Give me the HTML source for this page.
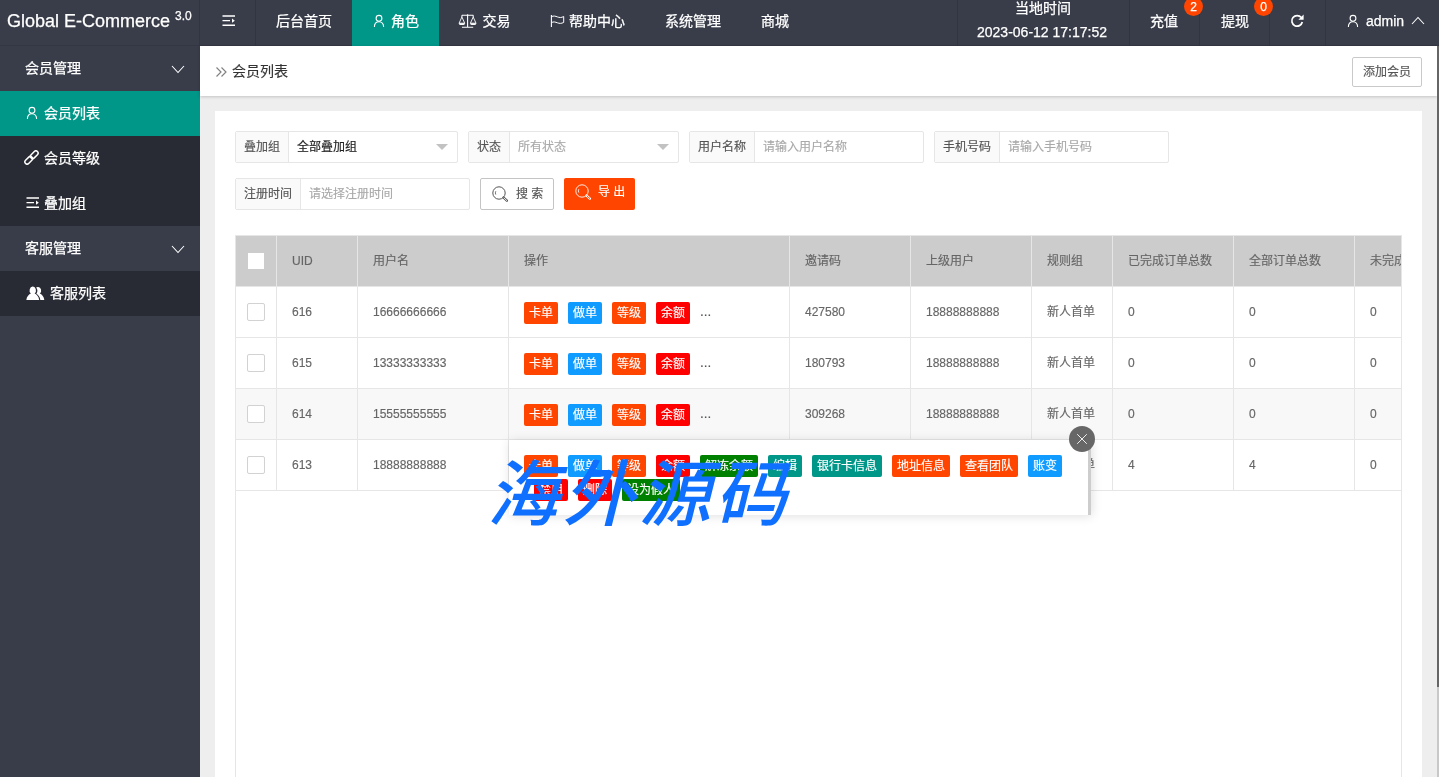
<!DOCTYPE html>
<html lang="zh-CN">
<head>
<meta charset="utf-8">
<title>会员列表</title>
<style>
*{box-sizing:border-box;margin:0;padding:0}
html,body{width:1439px;height:777px;overflow:hidden;background:#eee}
body{font-family:"Liberation Sans","Noto Sans CJK SC",sans-serif;font-size:14px;color:#333;position:relative;line-height:1}
svg{display:block}
#hd,#side{-webkit-text-stroke:0.250px #fff}
#crumb,#card,#tip{-webkit-text-stroke-width:0.150px}
#root{position:absolute;left:0;top:0;width:1439px;height:777px;will-change:transform;overflow:hidden}
.abs{position:absolute}
/* header */
#hd{position:absolute;left:0;top:0;width:1439px;height:46px;background:#393d49;color:#fff}
#logo{position:absolute;left:7px;top:0;height:46px;line-height:43px;font-size:18px;white-space:nowrap;color:#fff}
#logo sup{font-size:12px;position:relative;top:-0.400px;vertical-align:super;line-height:0}
.nav{position:absolute;top:0;height:46px;line-height:42.4px;font-size:14px;color:#fff;white-space:nowrap;text-align:center}
.nav.on{background:#009688}
.vline{position:absolute;top:0;width:1px;height:46px;background:#323540}
.nav svg{display:inline-block;vertical-align:middle;position:relative;top:-1px}
.badge{position:absolute;z-index:2;width:19px;height:19px;border-radius:50%;background:#ff4500;color:#fff;font-size:12px;line-height:21px;text-align:center;top:-3.200px}
/* side */
#side{position:absolute;left:0;top:46px;width:200px;height:731px;background:#393d49}
.mi{position:absolute;left:0;width:200px;height:45px;line-height:44.400px;color:#fff;font-size:14px;white-space:nowrap}
.mi.sub{background:#282b33}
.mi.on{background:#009688}
.mi span{position:absolute;top:0}
.mi svg{position:absolute}
/* crumb */
#crumb{position:absolute;left:200px;top:46px;width:1237px;height:50px;background:#fff;box-shadow:0 1px 3px rgba(0,0,0,.18)}
#crumb .t{position:absolute;left:32px;top:0;line-height:51px;font-size:14px;color:#333}
#addbtn{position:absolute;left:1152px;top:11px;width:70px;height:30px;border:1px solid #c9c9c9;border-radius:2px;background:#fff;font-size:12px;line-height:28px;text-align:center;color:#555}
/* card */
#card{position:absolute;left:215px;top:111px;width:1207px;height:700px;background:#fff}
.grp{position:absolute;height:32px;border:1px solid #e6e6e6;border-radius:2px;background:#fff}
.grp .lb{position:absolute;left:0;top:0;height:30px;background:#fafafa;border-right:1px solid #e6e6e6;font-size:12px;line-height:31px;color:#555;text-align:center}
.grp .ph{position:absolute;top:0;height:30px;line-height:31px;font-size:12px;color:#a9a9a9;white-space:nowrap}
.grp .tri{position:absolute;top:12px;width:0;height:0;border-left:6px solid transparent;border-right:6px solid transparent;border-top:6px solid #c2c2c2}
.btn{position:absolute;height:32px;border-radius:2px;font-size:12px;line-height:30px;white-space:nowrap}
/* table */
#tb{position:absolute;left:20px;top:124px;width:1167px;height:600px;border:1px solid #e6e6e6;overflow:hidden}
.row{position:absolute;left:0;width:1300px;height:51px;border-bottom:1px solid #e6e6e6}
.row.h{background:#ccc;color:#666}
.row.hv{background:#f8f8f8}
.c{position:absolute;top:0;height:50px;border-right:1px solid #e6e6e6;font-size:12px;line-height:50px;color:#666;padding-left:15px;white-space:nowrap;overflow:hidden}
.ck{display:block;position:absolute;left:11px;top:16px;width:18px;height:18px;border:1px solid #d2d2d2;border-radius:2px;background:#fff}
.b{font-style:normal;position:absolute;top:15px;height:22px;border-radius:2px;color:#fff;font-size:12px;line-height:23px;text-align:center;white-space:nowrap}
.bo{background:#ff4500}.bb{background:#0f9bff}.br{background:#ff0000}.bg{background:#008000}.bt{background:#009688}
#tip{position:absolute;left:509px;top:439.500px;width:582px;height:75.500px;background:#fff;border-right:3px solid #cdcdcd;box-shadow:1px 1px 10px rgba(0,0,0,.13)}
#tip .b{top:auto}
#cls{position:absolute;left:1069px;top:425.800px;width:26px;height:26px;border-radius:50%;background:#676767}
#wm{position:absolute;left:484px;top:459px;font-family:"Liberation Sans","Noto Sans CJK SC",sans-serif;font-size:72px;font-weight:500;color:#0f6fff;white-space:nowrap;line-height:1;letter-spacing:4px;transform:skewX(-14deg);transform-origin:0 100%}
#sb{position:absolute;left:1437px;top:46px;width:2px;height:731px;background:#c8c8c8}
#sb i{position:absolute;left:0;top:0;width:2px;height:641px;background:#666}
</style>
</head>
<body>
<div id="root">
<div id="hd">
  <div id="logo">Global E-Commerce <sup>3.0</sup></div>
  <div class="abs" style="left:0;top:45px;width:1439px;height:1px;background:#343743"></div>
  <div class="vline" style="left:199px"></div>
  <svg class="abs" style="left:221.500px;top:15.400px" width="14" height="12" viewBox="0 0 14 12"><path d="M0.500 1h12.500M0.500 5.650h7.500M0.500 10.300h12.500" stroke="#fff" stroke-width="1.400" fill="none"/><path d="M10 3.500l2.800 2.150L10 7.800z" fill="#fff"/></svg>
  <div class="vline" style="left:255px"></div>
  <div class="nav" style="left:256px;width:96px">后台首页</div>
  <div class="nav on" style="left:352px;width:87px"></div>
  <svg class="abs" style="left:373px;top:14px" width="12" height="14" viewBox="0 0 12 14"><circle cx="6" cy="4.3" r="2.9" stroke="#fff" stroke-width="1.1" fill="none"/><path d="M1.400 13c0-3.200 1.900-5.300 4.600-5.300s4.600 2.100 4.600 5.300" stroke="#fff" stroke-width="1.1" fill="none"/></svg>
  <div class="nav" style="left:391px">角色</div>
  <svg class="abs" style="left:458px;top:14px" width="19" height="14" viewBox="0 0 19 14"><path d="M9.600 0.300V13.300M4 13.300H15.200M3.900 1.200H15.300M3.900 1.200V3M15.200 1.200V3" stroke="#fff" stroke-width="1.100" fill="none"/><path d="M3.900 3L1.100 9.200H6.700ZM15.200 3L12.400 9.200H18Z" stroke="#fff" stroke-width="0.900" fill="none" stroke-linejoin="round"/><path d="M0.700 9.200H7.100a3.200 1.900 0 0 1-6.400 0zM12 9.200H18.400a3.200 1.900 0 0 1-6.400 0z" fill="#fff"/></svg>
  <div class="nav" style="left:482.500px">交易</div>
  <svg class="abs" style="left:550px;top:14px" width="15" height="14" viewBox="0 0 15 14"><path d="M1.400 1V13" stroke="#fff" stroke-width="1.100" fill="none"/><path d="M1.400 2.700c2.100-1.200 4.200-0.500 6 0.200s4 1 6.300-0.400v5.900c-2.300 1.400-4.500 1.100-6.300 0.400s-3.900-1.400-6-0.200" stroke="#fff" stroke-width="1" fill="none"/></svg>
  <div class="nav" style="left:569px">帮助中心</div>
  <div class="nav" style="left:665px">系统管理</div>
  <div class="nav" style="left:761px">商城</div>
  <div class="vline" style="left:957px"></div>
  <div class="nav" style="left:1015px;top:-13px">当地时间</div>
  <div class="nav" style="left:977px;top:11.400px">2023-06-12 17:17:52</div>
  <div class="vline" style="left:1129px"></div>
  <div class="nav" style="left:1150px">充值</div>
  <div class="badge" style="left:1184px">2</div>
  <div class="vline" style="left:1199px"></div>
  <div class="nav" style="left:1221px">提现</div>
  <div class="badge" style="left:1254px">0</div>
  <div class="vline" style="left:1269px"></div>
  <svg class="abs" style="left:1290px;top:14px" width="15" height="14" viewBox="0 0 15 14"><path d="M11.300 3.600A5.300 5.300 0 1 0 12.300 8" stroke="#fff" stroke-width="1.700" fill="none"/><path d="M13.600 0.600v5.200h-5.200z" fill="#fff"/></svg>
  <div class="vline" style="left:1325px"></div>
  <svg class="abs" style="left:1347px;top:14px" width="12" height="14" viewBox="0 0 12 14"><circle cx="6" cy="4.300" r="2.900" stroke="#fff" stroke-width="1.100" fill="none"/><path d="M1.400 13c0-3.200 1.900-5.300 4.600-5.300s4.600 2.100 4.600 5.300" stroke="#fff" stroke-width="1.100" fill="none"/></svg>
  <div class="nav" style="left:1366px">admin</div>
  <svg class="abs" style="left:1411px;top:16px" width="14" height="9" viewBox="0 0 14 9"><path d="M1 8l6-6.500 6 6.500" stroke="#fff" stroke-width="1.100" fill="none"/></svg>
</div>
<div id="side">
  <div class="mi" style="top:0"><span style="left:25px">会员管理</span><svg style="left:171px;top:19px" width="14" height="9" viewBox="0 0 14 9"><path d="M1 1l6 6.500 6-6.500" stroke="#fff" stroke-width="1.100" fill="none"/></svg></div>
  <div class="mi sub on" style="top:45px"><svg style="left:26px;top:15px" width="12" height="14" viewBox="0 0 12 14"><circle cx="6" cy="4.300" r="2.900" stroke="#fff" stroke-width="1.100" fill="none"/><path d="M1.400 13c0-3.200 1.900-5.300 4.600-5.300s4.600 2.100 4.600 5.300" stroke="#fff" stroke-width="1.100" fill="none"/></svg><span style="left:44px">会员列表</span></div>
  <div class="mi sub" style="top:90px"><svg style="left:24px;top:14.200px" width="15" height="15" viewBox="0 0 15 15"><g transform="rotate(-45 7.500 7.500)" stroke="#fff" stroke-width="1.500" fill="none"><rect x="-0.900" y="5.300" width="8.900" height="4.400" rx="2.200"/><rect x="7" y="5.300" width="8.900" height="4.400" rx="2.200"/></g></svg><span style="left:44px">会员等级</span></div>
  <div class="mi sub" style="top:135px"><svg style="left:25.500px;top:16.200px" width="14" height="12" viewBox="0 0 14 12"><path d="M0.500 1h12.500M0.500 5.650h7.500M0.500 10.300h12.500" stroke="#fff" stroke-width="1.400" fill="none"/><path d="M10 3.500l2.800 2.150L10 7.800z" fill="#fff"/></svg><span style="left:44px">叠加组</span></div>
  <div class="mi" style="top:180px"><span style="left:25px">客服管理</span><svg style="left:171px;top:19px" width="14" height="9" viewBox="0 0 14 9"><path d="M1 1l6 6.500 6-6.500" stroke="#fff" stroke-width="1.100" fill="none"/></svg></div>
  <div class="mi sub" style="top:225px"><svg style="left:25.500px;top:14.600px" width="19" height="15" viewBox="0 0 19 15"><g transform="scale(1.040,1.170)"><path d="M6.500 0.500a3 3.300 0 0 1 1.800 6c1.800 0.800 4 2.300 4.400 5.500h-12.400c0.400-3.200 2.600-4.700 4.400-5.500a3 3.300 0 0 1 1.800-6z" fill="#fff"/><path d="M11.800 0.800a2.800 3.100 0 0 1 1.500 5.700c1.800 0.800 3.900 2.300 4.300 5.500h-3.800c-0.400-2.600-1.900-4.300-3.800-5.300 1.300-1.400 1.400-4-0.300-5.400a3 3 0 0 1 2.100-0.500z" fill="#fff"/></g></svg><span style="left:50px">客服列表</span></div>
</div>
<div id="crumb"><svg class="abs" style="left:15px;top:19.800px" width="12" height="12" viewBox="0 0 12 12"><path d="M1.500 1.500l4.500 4.500-4.500 4.500M6.500 1.500l4.500 4.500-4.500 4.500" stroke="#808080" stroke-width="1.150" fill="none"/></svg><div class="t">会员列表</div><div id="addbtn">添加会员</div></div>
<div id="card">
<div class="grp" style="left:20px;top:20px;width:223px"><div class="lb" style="width:53px">叠加组</div><div class="ph" style="color:#222;left:61px">全部叠加组</div><i class="tri" style="left:200px"></i></div>
<div class="grp" style="left:253px;top:20px;width:211px"><div class="lb" style="width:41px">状态</div><div class="ph" style="left:49px">所有状态</div><i class="tri" style="left:188px"></i></div>
<div class="grp" style="left:474px;top:20px;width:235px"><div class="lb" style="width:65px">用户名称</div><div class="ph" style="left:73px">请输入用户名称</div></div>
<div class="grp" style="left:719px;top:20px;width:235px"><div class="lb" style="width:65px">手机号码</div><div class="ph" style="left:73px">请输入手机号码</div></div>
<div class="grp" style="left:20px;top:67px;width:235px"><div class="lb" style="width:65px">注册时间</div><div class="ph" style="left:73px">请选择注册时间</div></div>
<div class="btn" style="left:265px;top:67px;width:74px;border:1px solid #c4c4c4;background:#fff;color:#555"><svg class="abs" style="left:11px;top:6.800px" width="18" height="17" viewBox="0 0 18 17"><circle cx="7" cy="7" r="6.200" stroke="#555" stroke-width="1" fill="none"/><path d="M3.800 5.200a3.600 3.600 0 0 0 0 3.400" stroke="#555" stroke-width="0.800" fill="none"/><path d="M11.500 11.500l3.400 3.200" stroke="#555" stroke-width="2.300" stroke-linecap="round"/><path d="M12 12l2.700 2.500" stroke="#fff" stroke-width="0.900" stroke-linecap="round"/></svg><span class="abs" style="left:35px;top:-0.500px">搜 索</span></div>
<div class="btn" style="left:349px;top:67px;width:71px;background:#ff4500;color:#fff"><svg class="abs" style="left:11px;top:5.800px" width="18" height="17" viewBox="0 0 18 17"><circle cx="7" cy="7" r="6.200" stroke="#fff" stroke-width="0.900" fill="none"/><path d="M3.800 5.200a3.600 3.600 0 0 0 0 3.400" stroke="#fff" stroke-width="0.800" fill="none"/><path d="M11.500 11.500l3.400 3.200" stroke="#fff" stroke-width="2.300" stroke-linecap="round"/><path d="M12 12l2.700 2.500" stroke="#ff4500" stroke-width="0.900" stroke-linecap="round"/></svg><span class="abs" style="left:34px;top:-1.500px">导 出</span></div>
<div id="tb">
<div class="row h" style="top:0"><div class="c" style="left:0;width:41px;padding:0"><i class="ck" style="border:0;border-radius:0;left:12px;top:17px;width:16px;height:16px"></i></div><div class="c" style="left:41px;width:81px">UID</div><div class="c" style="left:122px;width:151px">用户名</div><div class="c" style="left:273px;width:281px">操作</div><div class="c" style="left:554px;width:121px">邀请码</div><div class="c" style="left:675px;width:121px">上级用户</div><div class="c" style="left:796px;width:81px">规则组</div><div class="c" style="left:877px;width:121px">已完成订单总数</div><div class="c" style="left:998px;width:121px">全部订单总数</div><div class="c" style="left:1119px;width:121px">未完成订单</div></div>
<div class="row" style="top:51px"><div class="c" style="left:0;width:41px;padding:0"><i class="ck"></i></div><div class="c" style="left:41px;width:81px">616</div><div class="c" style="left:122px;width:151px">16666666666</div><div class="c" style="left:273px;width:281px;padding:0"><i class="b bo" style="left:15px;width:34px">卡单</i><i class="b bb" style="left:59px;width:34px">做单</i><i class="b bo" style="left:103px;width:34px">等级</i><i class="b br" style="left:147px;width:34px">余额</i><span class="abs" style="left:191px;top:0;font-size:13.500px;color:#555">...</span></div><div class="c" style="left:554px;width:121px">427580</div><div class="c" style="left:675px;width:121px">18888888888</div><div class="c" style="left:796px;width:81px">新人首单</div><div class="c" style="left:877px;width:121px">0</div><div class="c" style="left:998px;width:121px">0</div><div class="c" style="left:1119px;width:121px">0</div></div>
<div class="row" style="top:102px"><div class="c" style="left:0;width:41px;padding:0"><i class="ck"></i></div><div class="c" style="left:41px;width:81px">615</div><div class="c" style="left:122px;width:151px">13333333333</div><div class="c" style="left:273px;width:281px;padding:0"><i class="b bo" style="left:15px;width:34px">卡单</i><i class="b bb" style="left:59px;width:34px">做单</i><i class="b bo" style="left:103px;width:34px">等级</i><i class="b br" style="left:147px;width:34px">余额</i><span class="abs" style="left:191px;top:0;font-size:13.500px;color:#555">...</span></div><div class="c" style="left:554px;width:121px">180793</div><div class="c" style="left:675px;width:121px">18888888888</div><div class="c" style="left:796px;width:81px">新人首单</div><div class="c" style="left:877px;width:121px">0</div><div class="c" style="left:998px;width:121px">0</div><div class="c" style="left:1119px;width:121px">0</div></div>
<div class="row hv" style="top:153px"><div class="c" style="left:0;width:41px;padding:0"><i class="ck"></i></div><div class="c" style="left:41px;width:81px">614</div><div class="c" style="left:122px;width:151px">15555555555</div><div class="c" style="left:273px;width:281px;padding:0"><i class="b bo" style="left:15px;width:34px">卡单</i><i class="b bb" style="left:59px;width:34px">做单</i><i class="b bo" style="left:103px;width:34px">等级</i><i class="b br" style="left:147px;width:34px">余额</i><span class="abs" style="left:191px;top:0;font-size:13.500px;color:#555">...</span></div><div class="c" style="left:554px;width:121px">309268</div><div class="c" style="left:675px;width:121px">18888888888</div><div class="c" style="left:796px;width:81px">新人首单</div><div class="c" style="left:877px;width:121px">0</div><div class="c" style="left:998px;width:121px">0</div><div class="c" style="left:1119px;width:121px">0</div></div>
<div class="row" style="top:204px"><div class="c" style="left:0;width:41px;padding:0"><i class="ck"></i></div><div class="c" style="left:41px;width:81px">613</div><div class="c" style="left:122px;width:151px">18888888888</div><div class="c" style="left:273px;width:281px;padding:0"><i class="b bo" style="left:15px;width:34px">卡单</i><i class="b bb" style="left:59px;width:34px">做单</i><i class="b bo" style="left:103px;width:34px">等级</i><i class="b br" style="left:147px;width:34px">余额</i><span class="abs" style="left:191px;top:0;font-size:13.500px;color:#555">...</span></div><div class="c" style="left:554px;width:121px">966618</div><div class="c" style="left:675px;width:121px">18888888888</div><div class="c" style="left:796px;width:81px">新人首单</div><div class="c" style="left:877px;width:121px">4</div><div class="c" style="left:998px;width:121px">4</div><div class="c" style="left:1119px;width:121px">0</div></div>
</div>
</div>
<div id="tip"><i class="b bo" style="left:15px;top:15px;width:34px">卡单</i><i class="b bb" style="left:59px;top:15px;width:34px">做单</i><i class="b bo" style="left:103px;top:15px;width:34px">等级</i><i class="b br" style="left:147px;top:15px;width:34px">余额</i><i class="b bg" style="left:191px;top:15px;width:58px">解冻余额</i><i class="b bt" style="left:259px;top:15px;width:34px">编辑</i><i class="b bt" style="left:303px;top:15px;width:70px">银行卡信息</i><i class="b bo" style="left:383px;top:15px;width:58px">地址信息</i><i class="b bo" style="left:451px;top:15px;width:58px">查看团队</i><i class="b bb" style="left:519px;top:15px;width:34px">账变</i><i class="b br" style="left:25px;top:39px;width:34px">禁用</i><i class="b br" style="left:69px;top:39px;width:34px">删除</i><i class="b bg" style="left:113px;top:39px;width:58px">设为假人</i></div>
<div id="cls"><svg width="26" height="26" viewBox="0 0 26 26"><path d="M8.200 8.200l9.600 9.600M17.800 8.200l-9.600 9.600" stroke="#eee" stroke-width="1"/></svg></div>
<div id="wm">海外源码</div>
<div id="sb"><i></i></div>
</div>
</body>
</html>
